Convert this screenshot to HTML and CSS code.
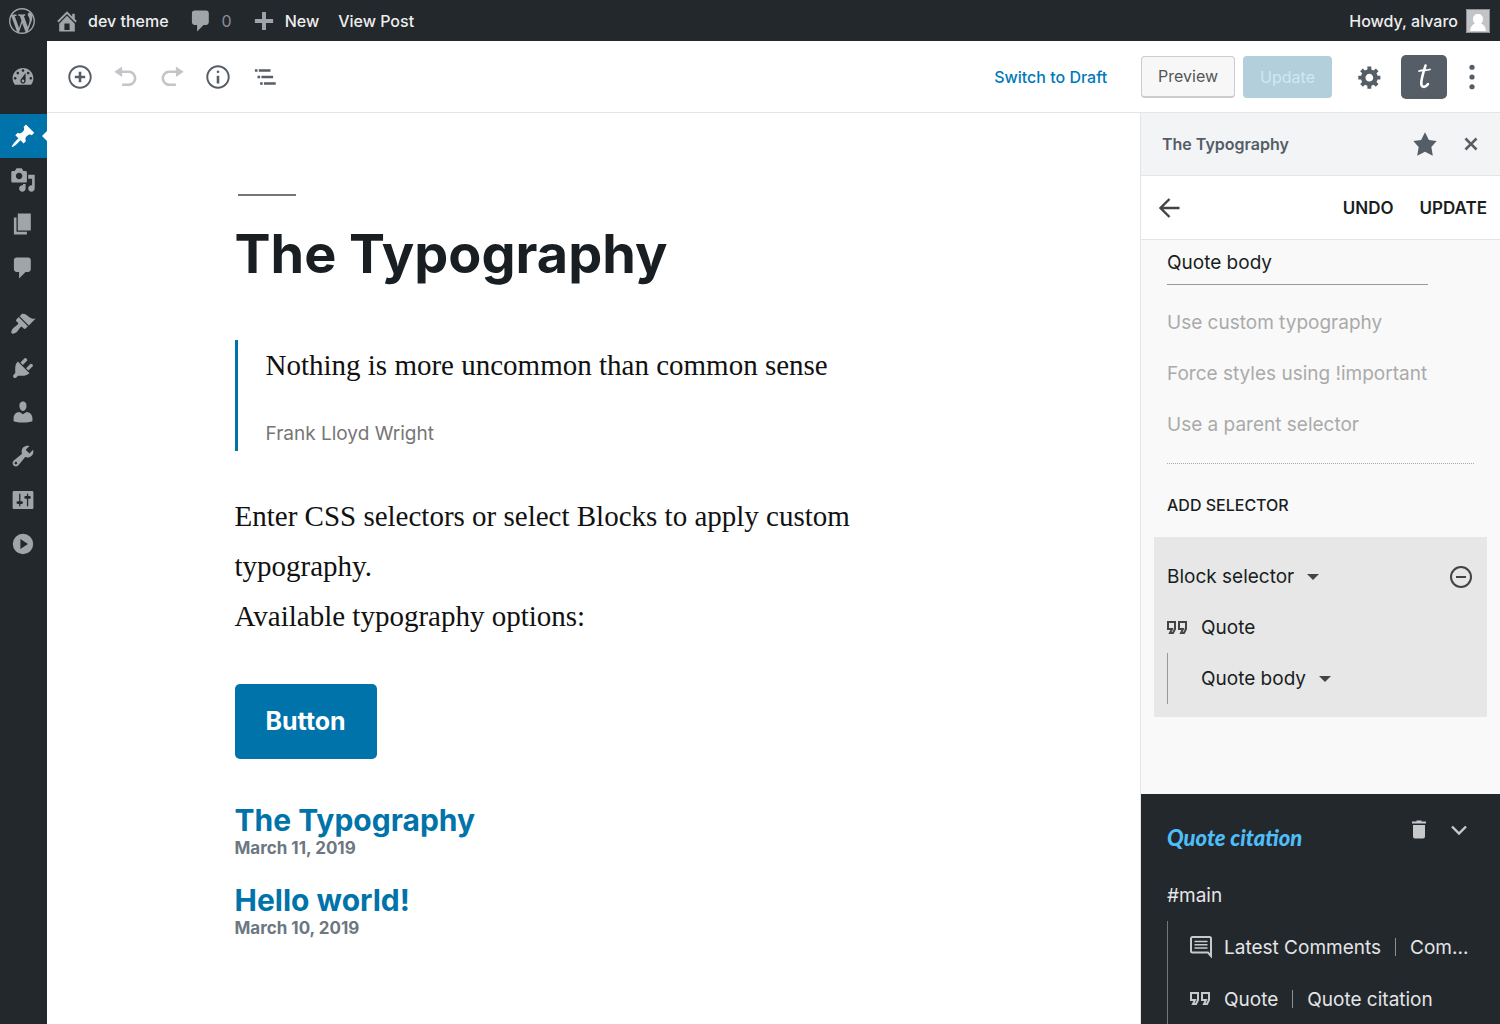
FILE: index.html
```html
<!DOCTYPE html>
<html lang="en">
<head>
<meta charset="utf-8">
<meta name="viewport" content="width=device-width, initial-scale=1">
<title>Edit Post: The Typography</title>
<link rel="stylesheet" href="styles.css">
</head>
<body>
<nav class="adminbar" aria-label="Toolbar">
  <a class="bar-logo" href="#" aria-label="About WordPress"><svg class="icon" viewBox="0 0 20 20"><path d="M20 10c0-5.51-4.49-10-10-10C4.48 0 0 4.49 0 10c0 5.52 4.48 10 10 10 5.51 0 10-4.48 10-10zM7.78 15.37L4.37 6.22c.55-.02 1.17-.08 1.17-.08.5-.06.44-1.13-.06-1.11 0 0-1.45.11-2.37.11-.18 0-.37 0-.58-.01C4.12 2.69 6.87 1.11 10 1.11c2.33 0 4.45.87 6.05 2.34-.68-.11-1.65.39-1.65 1.58 0 .74.45 1.36.9 2.1.35.61.55 1.36.55 2.46 0 1.49-1.4 5-1.4 5l-3.03-8.37c.54-.02.82-.17.82-.17.5-.05.44-1.25-.06-1.22 0 0-1.44.12-2.38.12-.87 0-2.33-.12-2.33-.12-.5-.03-.56 1.2-.06 1.22l.92.08 1.26 3.41zM17.41 10c.24-.64.74-1.87.43-4.25.7 1.29 1.05 2.71 1.05 4.25 0 3.29-1.73 6.24-4.4 7.78.97-2.59 1.94-5.2 2.92-7.78zM6.1 18.09C3.12 16.65 1.11 13.53 1.11 10c0-1.3.23-2.48.72-3.59C3.25 10.3 4.67 14.2 6.1 18.09zm4.03-6.63l2.58 6.98c-.86.29-1.76.45-2.71.45-.79 0-1.57-.11-2.29-.33.81-2.38 1.62-4.74 2.42-7.1z"/></svg></a>
  <a class="bar-item" href="#"><svg class="icon" viewBox="0 0 20 20"><path d="M16 8.5l1.53 1.53-1.06 1.06L10 4.6l-6.47 6.49-1.06-1.06L10 2.5l4 4v-2h2v4zm-6-2.46l6 5.99V18H4v-5.97zM12 17v-5H8v5h4z"/></svg>dev theme</a>
  <a class="bar-item bar-count" href="#"><svg class="icon" viewBox="0 0 20 20"><path d="M5 2h9c1.1 0 2 .9 2 2v7c0 1.1-.9 2-2 2h-2l-5 5v-5H5c-1.1 0-2-.9-2-2V4c0-1.1.9-2 2-2z"/></svg>0</a>
  <a class="bar-item" href="#"><svg class="icon" viewBox="0 0 20 20"><path d="M17 8.5v3h-5.5V17h-3v-5.500H3v-3h5.500V3h3v5.500z"/></svg>New</a>
  <a class="bar-item" href="#">View Post</a>
  <a class="bar-item bar-account" href="#">Howdy, alvaro
    <svg class="avatar" viewBox="0 0 24 24"><path fill="#c3c4c7" d="M0 0h24v24H0z"/><path fill="#fff" d="M12 5c3 0 5 2 5 5 0 2-.8 3.500-2 4.500 3 1 4.500 3.500 5 7.500H4c.5-4 2-6.500 5-7.500-1.200-1-2-2.500-2-4.500 0-3 2-5 5-5z"/><path fill="none" stroke="#8c8f94" d="M.5.5h23v23H.5z"/></svg></a>
</nav>
<div class="workspace">
  <nav class="adminmenu" aria-label="Main menu">
    <a href="#" aria-label="Dashboard"><svg class="icon" viewBox="0 0 20 20"><path fill-rule="evenodd" d="M3.760 16h12.480c1.100-1.370 1.760-3.110 1.760-5 0-4.420-3.580-8-8-8s-8 3.580-8 8c0 1.890.66 3.630 1.760 5zM10 4c.55 0 1 .45 1 1s-.45 1-1 1-1-.45-1-1 .45-1 1-1zM6 6c.55 0 1 .45 1 1s-.45 1-1 1-1-.45-1-1 .45-1 1-1zm8 0c.55 0 1 .45 1 1s-.45 1-1 1-1-.45-1-1 .45-1 1-1zm-5.370 5.550L12 7v6c0 1.100-.9 2-2 2s-2-.9-2-2c0-.57.24-1.080.63-1.450zM4 10c.55 0 1 .45 1 1s-.45 1-1 1-1-.45-1-1 .45-1 1-1zm12 0c.55 0 1 .45 1 1s-.45 1-1 1-1-.45-1-1 .45-1 1-1zm-5 3c0-.55-.45-1-1-1s-1 .45-1 1 .45 1 1 1 1-.45 1-1z"/></svg></a>
    <a class="current group-start" href="#" aria-label="Posts"><svg class="icon" viewBox="0 0 20 20"><path d="M10.440 3.020l1.820-1.820 6.360 6.350-1.830 1.820c-1.050-.68-2.480-.57-3.410.36l-.75.75c-.92.93-1.040 2.350-.35 3.410l-1.830 1.820-2.410-2.410-2.800 2.790c-.42.42-3.380 2.710-3.800 2.290s1.860-3.390 2.280-3.810l2.790-2.790L4.100 9.360l1.830-1.820c1.050.69 2.480.57 3.400-.36l.75-.75c.93-.92 1.050-2.350.36-3.410z"/></svg></a>
    <a href="#" aria-label="Media"><svg class="icon" viewBox="0 0 20 20"><path d="M13 11V4c0-.55-.45-1-1-1h-1.670L9 1H5L3.670 3H2c-.55 0-1 .45-1 1v7c0 .55.45 1 1 1h10c.55 0 1-.45 1-1zM7 4.500c1.380 0 2.500 1.120 2.500 2.500S8.380 9.500 7 9.500 4.500 8.380 4.500 7 5.620 4.500 7 4.500zM14 6h5v10.500c0 1.380-1.120 2.500-2.500 2.500S14 17.880 14 16.500s1.120-2.500 2.500-2.500c.17 0 .34.02.5.050V9h-3V6zm-4 8.050V13h2v3.500c0 1.380-1.120 2.500-2.500 2.500S7 17.880 7 16.500 8.120 14 9.500 14c.17 0 .34.02.5.050z"/></svg></a>
    <a href="#" aria-label="Pages"><svg class="icon" viewBox="0 0 20 20"><path d="M6 15V2h10v13H6zm-1 1h8v2H3V5h2v11z"/></svg></a>
    <a href="#" aria-label="Comments"><svg class="icon" viewBox="0 0 20 20"><path d="M5 2h9c1.100 0 2 .9 2 2v7c0 1.100-.9 2-2 2h-2l-5 5v-5H5c-1.100 0-2-.9-2-2V4c0-1.100.9-2 2-2z"/></svg></a>
    <a class="group-start" href="#" aria-label="Appearance"><svg class="icon" viewBox="0 0 20 20"><path d="M14.480 11.060L7.410 3.990l1.500-1.500c.5-.56 2.300-.47 3.510.32 1.210.8 1.430 1.280 2.910 2.100 1.180.64 2.450 1.260 4.450.85zm-.71.71L6.700 4.700 4.930 6.470c-.39.39-.39 1.020 0 1.410l1.060 1.060c.39.39.39 1.030 0 1.420-.6.6-1.430 1.110-2.210 1.690-.35.26-.7.53-1.010.84C1.430 14.230.4 16.080 1.400 17.070c.99 1 2.840-.03 4.180-1.360.31-.31.58-.66.85-1.020.57-.78 1.080-1.610 1.690-2.210.39-.39 1.020-.39 1.410 0l1.060 1.060c.39.39 1.020.39 1.410 0z"/></svg></a>
    <a href="#" aria-label="Plugins"><svg class="icon" viewBox="0 0 20 20"><path d="M13.110 4.360L9.870 7.600 8 5.730l3.240-3.240c.35-.34 1.050-.2 1.560.32.52.51.66 1.210.31 1.550zm-8 1.770l.91-1.120 9.010 9.010-1.190.84c-.71.71-2.630 1.160-3.820 1.160H6.140L4.900 17.260c-.59.59-1.540.59-2.120 0-.59-.58-.59-1.530 0-2.120l1.240-1.240v-3.880c0-1.130.4-3.190 1.090-3.890zm7.260 3.970l3.240-3.240c.34-.35 1.040-.21 1.550.31.52.51.66 1.210.31 1.550l-3.240 3.250z"/></svg></a>
    <a href="#" aria-label="Users"><svg class="icon" viewBox="0 0 20 20"><path d="M10 9.250c-2.270 0-2.730-3.440-2.730-3.440C7 4.020 7.820 2 9.970 2c2.160 0 2.980 2.020 2.710 3.810 0 0-.41 3.440-2.680 3.440zm0 2.570L12.720 10c2.390 0 4.520 2.330 4.520 4.530v2.490s-3.650 1.130-7.240 1.130c-3.650 0-7.240-1.130-7.240-1.130v-2.490c0-2.250 1.940-4.480 4.470-4.480z"/></svg></a>
    <a href="#" aria-label="Tools"><svg class="icon" viewBox="0 0 20 20"><path d="M16.680 9.770c-1.340 1.340-3.300 1.670-4.950.99l-5.410 6.520c-.99.99-2.590.99-3.580 0s-.99-2.590 0-3.570l6.520-5.420c-.68-1.650-.35-3.610.99-4.950 1.280-1.280 3.120-1.620 4.720-1.060l-2.890 2.890 2.820 2.820 2.860-2.870c.53 1.580.18 3.390-1.080 4.650zM3.810 16.210c.4.39 1.040.39 1.430 0 .4-.4.4-1.040 0-1.430-.39-.4-1.030-.4-1.430 0-.39.39-.39 1.030 0 1.430z"/></svg></a>
    <a href="#" aria-label="Settings"><svg class="icon" viewBox="0 0 20 20"><path d="M18 16V4c0-.55-.45-1-1-1H3c-.55 0-1 .45-1 1v12c0 .55.45 1 1 1h14c.55 0 1-.45 1-1zM8 11h1c.55 0 1 .45 1 1s-.45 1-1 1H8v1.500c0 .28-.22.5-.5.5s-.5-.22-.5-.5V13H6c-.55 0-1-.45-1-1s.45-1 1-1h1V5.500c0-.28.22-.5.5-.5s.5.22.5.5V11zm5-2h-1c-.55 0-1-.45-1-1s.45-1 1-1h1V5.500c0-.28.22-.5.5-.5s.5.22.5.5V7h1c.55 0 1 .45 1 1s-.45 1-1 1h-1v5.500c0 .28-.22.5-.5.5s-.5-.22-.5-.5V9z"/></svg></a>
    <button type="button" aria-label="Expand menu"><svg class="icon" viewBox="0 0 20 20"><path fill-rule="evenodd" d="M10 2.160a7.840 7.840 0 1 0 0 15.680 7.840 7.840 0 0 0 0-15.680zM8 6.120v7.760l5.820-3.880z"/></svg></button>
  </nav>
  <div class="editor">
    <header class="editor-header">
      <div class="tools">
        <button class="tool" type="button" aria-label="Add block"><svg class="icon" viewBox="0 0 20 20"><path d="M10 1c-5 0-9 4-9 9s4 9 9 9 9-4 9-9-4-9-9-9zm0 16.500c-4.100 0-7.500-3.400-7.500-7.500S5.900 2.500 10 2.500s7.500 3.400 7.500 7.500-3.400 7.500-7.500 7.500zM11 6H9v3H6v2h3v3h2v-3h3V9h-3V6z"/></svg></button>
        <button class="tool" type="button" aria-label="Undo" disabled><svg class="icon" viewBox="0 0 20 20"><path d="M12 5H7V2L1 6l6 4V7h5c2.200 0 4 1.800 4 4s-1.800 4-4 4H7v2h5c3.300 0 6-2.700 6-6s-2.700-6-6-6z"/></svg></button>
        <button class="tool" type="button" aria-label="Redo" disabled><svg class="icon" viewBox="0 0 20 20"><path d="M8 5h5V2l6 4-6 4V7H8c-2.200 0-4 1.800-4 4s1.800 4 4 4h5v2H8c-3.300 0-6-2.700-6-6s2.700-6 6-6z"/></svg></button>
        <button class="tool" type="button" aria-label="Content structure"><svg class="icon" viewBox="0 0 20 20"><path d="M9 15h2V9H9v6zm1-10c-.5 0-1 .5-1 1s.5 1 1 1 1-.5 1-1-.5-1-1-1zm0-4c-5 0-9 4-9 9s4 9 9 9 9-4 9-9-4-9-9-9zm0 16.500c-4.100 0-7.500-3.400-7.500-7.500S5.900 2.500 10 2.500s7.500 3.400 7.500 7.500-3.400 7.500-7.500 7.500z"/></svg></button>
        <button class="tool" type="button" aria-label="Block navigation"><svg class="icon" viewBox="0 0 20 20"><path d="M3 4h2v2H3zM6 4h9v2H6zM5 9h2v2H5zM8 9h9v2H8zM7 14h2v2H7zM10 14h9v2h-9z"/></svg></button>
      </div>
      <button class="link-button" type="button">Switch to Draft</button>
      <button class="preview" type="button">Preview</button>
      <button class="update" type="button" disabled>Update</button>
      <button class="tool gear" type="button" aria-label="Settings"><svg class="icon" viewBox="0 0 20 20"><path d="M18 12h-2.180c-.17.7-.44 1.350-.81 1.930l1.540 1.540-2.100 2.100-1.540-1.540c-.58.36-1.230.63-1.910.79V19H8v-2.180c-.68-.16-1.330-.43-1.910-.79l-1.540 1.540-2.120-2.120 1.540-1.540c-.36-.58-.63-1.230-.79-1.910H1V9.030h2.170c.16-.7.44-1.350.8-1.940L2.430 5.550l2.100-2.100 1.540 1.540c.58-.37 1.240-.64 1.930-.81V2h3v2.180c.68.16 1.330.43 1.910.79l1.540-1.540 2.120 2.120-1.540 1.540c.36.59.64 1.240.8 1.940H18V12zm-8.500 1.500c1.660 0 3-1.340 3-3s-1.340-3-3-3-3 1.340-3 3 1.340 3 3 3z"/></svg></button>
      <button class="plugin" type="button" aria-label="Typography" aria-pressed="true"><svg class="plugin-icon" viewBox="0 0 26 30" fill="none" stroke="#fff" stroke-linecap="round"><path stroke-width="2.600" d="M14.500 3.500c-1.500 5-3.700 11-4.200 17-.3 5 3.700 6 6.700 1.500"/><path stroke-width="1.800" d="M8 9c3.500-1 7.500-.5 11-1.500"/></svg></button>
      <button class="tool more" type="button" aria-label="More"><svg class="icon" viewBox="0 0 20 20"><circle cx="10" cy="2.500" r="2"/><circle cx="10" cy="10" r="2"/><circle cx="10" cy="17.500" r="2"/></svg></button>
    </header>
    <div class="editor-body">
      <main class="canvas">
        <article class="post">
          <hr class="title-rule">
          <h1>The Typography</h1>
          <blockquote>
            <p>Nothing is more uncommon than common sense</p>
            <cite>Frank Lloyd Wright</cite>
          </blockquote>
          <p class="copy">Enter CSS selectors or select Blocks to apply custom typography.<br>Available typography options:</p>
          <button class="block-button" type="button">Button</button>
          <ul class="latest">
            <li><a href="#">The Typography</a><time datetime="2019-03-11">March 11, 2019</time></li>
            <li><a href="#">Hello world!</a><time datetime="2019-03-10">March 10, 2019</time></li>
          </ul>
        </article>
      </main>
      <aside class="sidebar">
        <header class="sidebar-title">
          <h2>The Typography</h2>
          <button class="tool" type="button" aria-label="Unpin"><svg class="icon" viewBox="0 0 20 20"><path d="M10 1l3 6 6 .75-4.120 4.620L16 19l-6-3-6 3 1.130-6.630L1 7.750 7 7z"/></svg></button>
          <button class="tool" type="button" aria-label="Close"><svg class="icon" viewBox="0 0 20 20"><path d="M14.950 6.460L11.410 10l3.540 3.540-1.410 1.410L10 11.420l-3.530 3.530-1.420-1.420L8.580 10 5.050 6.470l1.420-1.420L10 8.580l3.540-3.530z"/></svg></button>
        </header>
        <div class="sidebar-actions">
          <button class="back" type="button" aria-label="Back"><svg class="icon" viewBox="0 0 26 26" fill="none" stroke="#444" stroke-width="2.400"><path d="M23.500 13H4.500M13.500 4l-9 9 9 9"/></svg></button>
          <button class="action" type="button">UNDO</button>
          <button class="action" type="button">UPDATE</button>
        </div>
        <section class="settings">
          <input class="name" type="text" value="Quote body" aria-label="Name">
          <button class="option" type="button">Use custom typography</button>
          <button class="option" type="button">Force styles using !important</button>
          <button class="option" type="button">Use a parent selector</button>
          <button class="add" type="button">ADD SELECTOR</button>
        </section>
        <section class="selector">
          <div class="selector-row">
            <select aria-label="Selector type"><option>Block selector</option></select>
            <svg class="caret" viewBox="0 0 12 6"><path d="M0 0h12L6 6z"/></svg>
            <button class="remove" type="button" aria-label="Remove selector"><svg class="icon" viewBox="0 0 26 26" fill="none" stroke="#444" stroke-width="2"><circle cx="13" cy="13" r="10"/><path d="M8 13h10"/></svg></button>
          </div>
          <div class="selector-row">
            <svg class="quote-icon" viewBox="0 0 22 16" fill="none" stroke="#444" stroke-width="2"><path d="M1 2h7v7l-2 4H3l2-4H1zM12 2h7v7l-2 4h-3l2-4h-4z"/></svg>
            <span>Quote</span>
          </div>
          <div class="selector-row nested">
            <select aria-label="Block part"><option>Quote body</option></select>
            <svg class="caret" viewBox="0 0 12 6"><path d="M0 0h12L6 6z"/></svg>
          </div>
        </section>
        <section class="saved">
          <header class="saved-head">
            <h3>Quote citation</h3>
            <button class="saved-tool" type="button" aria-label="Delete"><svg class="icon" viewBox="0 0 26 26"><path d="M6 4.500h4.500V3.500h5v1H20v2H6zM7 8h12v11.500a2 2 0 0 1-2 2H9a2 2 0 0 1-2-2z"/></svg></button>
            <button class="saved-tool" type="button" aria-label="Expand"><svg class="icon" viewBox="0 0 26 26" fill="none" stroke="#c8c9ca" stroke-width="2.400"><path d="M6 9.500l7 7 7-7"/></svg></button>
          </header>
          <p class="saved-parent">#main</p>
          <ul class="saved-list">
            <li>
              <svg class="comment-icon" viewBox="0 0 22 22" fill="none" stroke="#c8c9ca" stroke-width="2"><path d="M21 20l-3-3.500H2.500c-.9 0-1.500-.6-1.500-1.500V2.500C1 1.600 1.600 1 2.500 1h17c.9 0 1.500.6 1.500 1.500z"/><path stroke-width="1.600" d="M4.500 5.500h13M4.500 8.700h13M4.500 12h13"/></svg>
              <span>Latest Comments</span><span class="bar" aria-hidden="true"></span><span>Com...</span>
            </li>
            <li>
              <svg class="quote-icon" viewBox="0 0 22 16" fill="none" stroke="#c8c9ca" stroke-width="2"><path d="M1 2h7v7l-2 4H3l2-4H1zM12 2h7v7l-2 4h-3l2-4h-4z"/></svg>
              <span>Quote</span><span class="bar" aria-hidden="true"></span><span>Quote citation</span>
            </li>
          </ul>
        </section>
      </aside>
    </div>
  </div>
</div>
</body>
</html>
```
FILE: styles.css
```css
* { box-sizing: border-box; }
body {
  margin: 0;
  min-height: 100vh;
  display: flex;
  flex-direction: column;
  background: #fff;
  color: #191e23;
  font-family: Inter, "Liberation Sans", sans-serif;
  font-size: 16px;
}
button, input, select {
  font: inherit;
  color: inherit;
  margin: 0;
  padding: 0;
  border: 0;
  background: none;
  text-align: left;
}
a { color: inherit; text-decoration: none; }
h1, h2, h3, p, ul, blockquote, hr { margin: 0; padding: 0; }
ul { list-style: none; }
svg { display: block; flex: none; }
.icon { width: 26px; height: 26px; fill: currentColor; }
.icon[fill="none"] { fill: none; }

.adminbar {
  display: flex;
  align-items: center;
  gap: 19px;
  height: 41px;
  padding-right: 10px;
  background: #23282d;
  color: #eee;
  font-weight: 500;
}
.adminbar .icon { color: #a0a5aa; }
.bar-logo { display: flex; margin-left: 9px; }
.bar-item { display: flex; align-items: center; gap: 8px; }
.bar-count { color: #8c8f94; font-weight: 400; }
.bar-account { margin-left: auto; }
.avatar { width: 24px; height: 24px; }

.workspace { flex: 1; display: flex; }
.adminmenu {
  flex: none;
  width: 47px;
  padding-top: 14px;
  background: #23282d;
  color: #a0a5aa;
}
.adminmenu a, .adminmenu button {
  display: flex;
  align-items: center;
  padding-left: 10px;
  width: 100%;
  height: 44px;
}
.adminmenu .group-start { margin-top: 12px; }
.adminmenu .current {
  position: relative;
  margin-top: 15px;
  background: #0073aa;
  color: #fff;
}
.current::after {
  content: "";
  position: absolute;
  right: 0;
  top: 17px;
  border: 5px solid transparent;
  border-right-color: #fff;
  border-left: 0;
}

.editor { flex: 1; min-width: 0; display: flex; flex-direction: column; }
.editor-header {
  display: flex;
  align-items: center;
  height: 72px;
  padding: 0 15px 0 20px;
  border-bottom: 1px solid #e2e4e7;
  color: #555d66;
}
.tools { display: flex; gap: 20px; margin-right: auto; }
.tool:disabled { opacity: .35; }
.link-button { margin-right: 34px; color: #0079b8; font-weight: 500; }
.preview, .update {
  height: 42px;
  border-radius: 4px;
}
.preview {
  margin-right: 8px;
  padding: 0 16px;
  border: 1px solid #ccc;
  border-bottom-width: 2px;
  background: #f7f7f7;
  color: #555;
}
.update { padding: 0 17px; background: #b2cfdb; color: #d1e8f2; }
.gear { margin: 0 18px 0 25px; }
.plugin {
  display: flex;
  align-items: center;
  justify-content: center;
  width: 46px;
  height: 44px;
  margin-right: 12px;
  border-radius: 5px;
  background: #555d66;
}
.plugin-icon { width: 26px; height: 30px; }

.editor-body { flex: 1; display: flex; }
.canvas { flex: 1; min-width: 0; padding: 81px 20px 40px; }
.post { max-width: 718px; margin: 0 auto; }
.title-rule {
  width: 58px;
  height: 2px;
  margin-left: 3px;
  border: 0;
  background: #767676;
}
h1 {
  margin: 23px 0 51px;
  font-size: 54px;
  line-height: 70px;
  font-weight: 700;
}
blockquote {
  padding: 0 0 2px 28px;
  border-left: 3px solid #0073aa;
  color: #111;
}
blockquote p, .copy {
  font-family: "Liberation Serif", serif;
  font-size: 29px;
  line-height: 50px;
}
cite {
  display: block;
  margin-top: 29px;
  font-size: 19px;
  line-height: 30px;
  font-style: normal;
  color: #767676;
}
.copy { margin: 40px 0 43px; color: #111; }
.block-button {
  padding: 0 31px;
  border-radius: 5px;
  background: #0073aa;
  color: #fff;
  font-size: 25px;
  line-height: 75px;
  font-weight: 700;
}
.latest { margin-top: 44px; display: grid; gap: 25px; }
.latest a, .latest time { display: block; font-weight: 700; }
.latest a { font-size: 30px; line-height: 35px; color: #0073aa; }
.latest time { font-size: 17px; line-height: 20px; color: #6c7781; }

.sidebar {
  flex: none;
  width: 360px;
  display: flex;
  flex-direction: column;
  border-left: 1px solid #e2e4e7;
  background: #f9f9f9;
  font-size: 19px;
}
.sidebar-title, .sidebar-actions {
  display: flex;
  align-items: center;
  border-bottom: 1px solid #e2e4e7;
}
.sidebar-title {
  height: 63px;
  gap: 20px;
  padding: 0 16px 0 21px;
  background: #f3f4f5;
  color: #555d66;
}
.sidebar-title h2 { margin-right: auto; font-size: 16px; font-weight: 600; }
.sidebar-actions {
  height: 64px;
  gap: 26px;
  padding: 0 13px 0 15px;
  background: #fff;
}
.back { margin-right: auto; }
.action { font-size: 17px; font-weight: 600; }
.settings { padding: 0 26px 18px; }
.name {
  display: block;
  width: 261px;
  height: 45px;
  border-bottom: 1px solid #999;
}
.option {
  display: block;
  height: 51px;
  color: #aaa;
}
.name + .option { margin-top: 12px; }
.add {
  display: block;
  width: 100%;
  height: 56px;
  margin-top: 13px;
  padding-top: 26px;
  border-top: 1px dotted #aaa;
  font-size: 16px;
  font-weight: 500;
}
.selector {
  margin: 0 13px 77px;
  padding: 14px 13px 13px;
  background: #e7e7e7;
}
.selector-row { display: flex; align-items: center; height: 51px; gap: 12px; }
select { appearance: none; }
.caret { width: 12px; height: 6px; fill: #444; }
.remove { margin-left: auto; }
.quote-icon { width: 22px; height: 16px; }
.nested { padding-left: 33px; border-left: 1px solid #999; }
.saved {
  flex: 1;
  padding: 16px 28px 0 26px;
  background: #23282d;
  color: #e4e5e6;
}
.saved-head { display: flex; align-items: flex-start; gap: 14px; height: 56px; padding-top: 7px; }
.saved-head h3 {
  margin-right: auto;
  font-family: Lato, sans-serif;
  font-size: 22px;
  line-height: 42px;
  font-style: italic;
  font-weight: 900;
  color: #4fbdf8;
}
.saved-tool { color: #c8c9ca; }
.saved-parent { line-height: 51px; padding-top: 4px; }
.saved-list { border-left: 1px solid #777; padding-left: 22px; }
.saved-list li { display: flex; align-items: center; height: 52px; gap: 12px; white-space: nowrap; }
.comment-icon { width: 22px; height: 22px; }
.bar { width: 1px; height: 18px; margin: 0 2px; background: #8c8f94; }
```
